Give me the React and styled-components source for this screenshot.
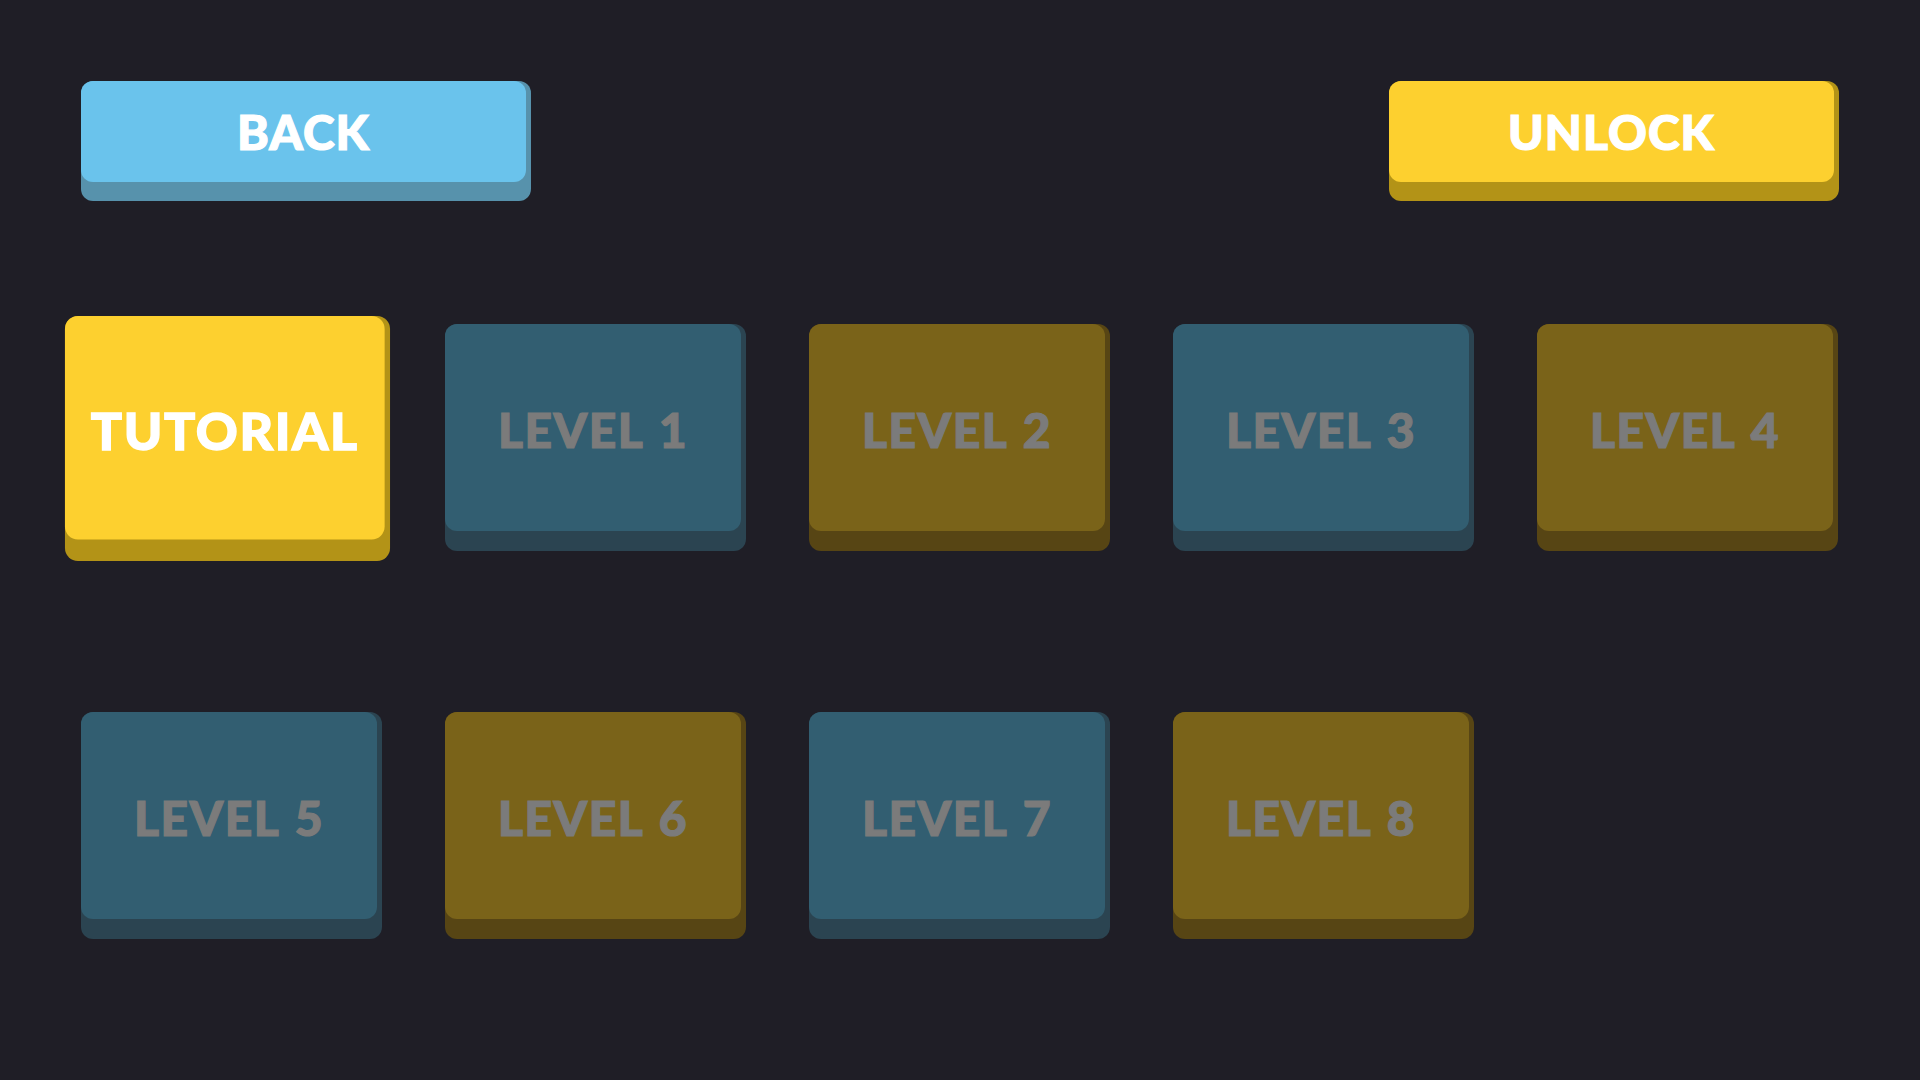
import React from "react";
import styled, { createGlobalStyle } from "styled-components";

const GlobalStyle = createGlobalStyle`
  html, body {
    margin: 0;
    padding: 0;
    background: #1f1e26;
  }
  body {
    font-family: "Lato", "Liberation Sans", sans-serif;
  }
`;

const tones = {
  sky: { face: "#6ac3ec", side: "#5792ac", text: "#ffffff" },
  gold: { face: "#fdd02f", side: "#b39317", text: "#ffffff" },
  teal: { face: "#325e71", side: "#2b4451", text: "#7b7b7b" },
  olive: { face: "#7a6319", side: "#574514", text: "#7b7b7b" },
};

const Screen = styled.div`
  width: 1920px;
  height: 1080px;
  box-sizing: border-box;
  padding: 81px 81px 0;
  background: #1f1e26;
  overflow: hidden;
`;

const TopBar = styled.div`
  display: flex;
  justify-content: space-between;
  align-items: flex-start;
`;

const Key = styled.button`
  display: block;
  border: 0;
  margin: 0;
  padding: 0 ${(p) => p.$side}px ${(p) => p.$drop}px 0;
  background: ${(p) => tones[p.$tone].side};
  border-radius: 12px;
  cursor: pointer;
  width: ${(p) => p.$w}px;
  height: ${(p) => p.$h}px;
  box-sizing: border-box;
  font-family: inherit;
  transform: ${(p) => (p.$selected ? "translate(-4px, 1px) scale(1.08)" : "none")};
`;

const Face = styled.span`
  display: flex;
  align-items: center;
  justify-content: center;
  width: 100%;
  height: 100%;
  border-radius: 12px;
  background: ${(p) => tones[p.$tone].face};
  color: ${(p) => tones[p.$tone].text};
  font-weight: 900;
  font-size: ${(p) => p.$size}px;
  letter-spacing: ${(p) => p.$track}px;
  word-spacing: 3px;
  -webkit-text-stroke: 1.2px currentColor;
  text-transform: uppercase;
  padding-top: ${(p) => p.$lift}px;
  box-sizing: border-box;
`;

const LevelGrid = styled.div`
  display: grid;
  grid-template-columns: repeat(5, 301px);
  grid-auto-rows: 227px;
  column-gap: 63px;
  row-gap: 161px;
  margin-top: 123px;
`;

function GameButton({ tone, label, w, h, side, drop, size, track = 1, lift = 0, selected }) {
  return (
    <Key $tone={tone} $w={w} $h={h} $side={side} $drop={drop} $selected={selected}>
      <Face $tone={tone} $size={size} $track={track} $lift={lift}>
        {label}
      </Face>
    </Key>
  );
}

const levels = [
  { label: "Tutorial", tone: "gold", selected: true },
  { label: "Level 1", tone: "teal" },
  { label: "Level 2", tone: "olive" },
  { label: "Level 3", tone: "teal" },
  { label: "Level 4", tone: "olive" },
  { label: "Level 5", tone: "teal" },
  { label: "Level 6", tone: "olive" },
  { label: "Level 7", tone: "teal" },
  { label: "Level 8", tone: "olive" },
];

export default function App() {
  return (
    <Screen>
      <GlobalStyle />
      <TopBar>
        <GameButton tone="sky" label="Back" w={450} h={120} side={5} drop={19} size={48} track={1} />
        <GameButton tone="gold" label="Unlock" w={450} h={120} side={5} drop={19} size={48} track={1} />
      </TopBar>
      <LevelGrid>
        {levels.map((lv) => (
          <GameButton
            key={lv.label}
            tone={lv.tone}
            label={lv.label}
            selected={lv.selected}
            w={301}
            h={227}
            side={5}
            drop={20}
            size={48}
            track={lv.selected ? 1.5 : 1.5}
            lift={4}
          />
        ))}
      </LevelGrid>
    </Screen>
  );
}
